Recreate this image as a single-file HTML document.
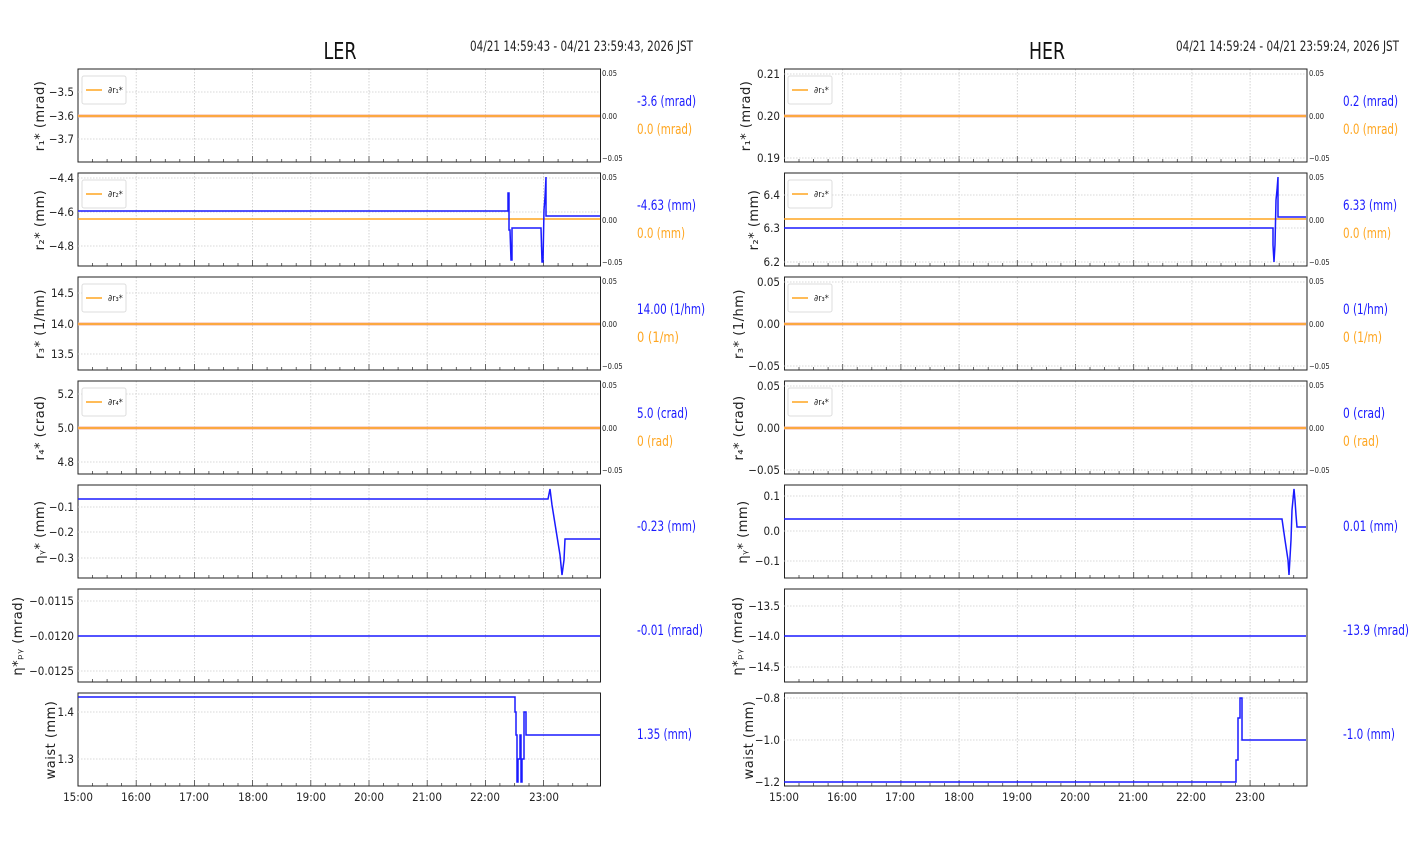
<!DOCTYPE html>
<html><head><meta charset="utf-8"><style>
html,body{margin:0;padding:0;background:#fff;}
svg{display:block;font-family:"Liberation Sans Narrow","DejaVu Sans Condensed","Liberation Sans",sans-serif;}
.t{font-size:11.5px;fill:#222;}
.s{font-size:7.5px;fill:#222;}
.yl{font-size:13px;fill:#222;letter-spacing:0.5px;font-family:"DejaVu Sans","Liberation Sans",sans-serif;}
.vb{font-size:14px;fill:#1a1aff;}
.vo{font-size:14px;fill:#ffa620;}
</style></head><body>
<svg width="1412" height="864" viewBox="0 0 1412 864" xmlns="http://www.w3.org/2000/svg">
<defs>
<g id="g">
 <g stroke="#c8c8c8" stroke-width="0.8" stroke-dasharray="1.5,1.5">
  <line x1="58.2" y1="0" x2="58.2" y2="93"/><line x1="116.4" y1="0" x2="116.4" y2="93"/><line x1="174.6" y1="0" x2="174.6" y2="93"/><line x1="232.8" y1="0" x2="232.8" y2="93"/><line x1="291" y1="0" x2="291" y2="93"/><line x1="349.2" y1="0" x2="349.2" y2="93"/><line x1="407.4" y1="0" x2="407.4" y2="93"/><line x1="465.6" y1="0" x2="465.6" y2="93"/>
 </g>
 <g stroke="#444" stroke-width="0.8">
  <line x1="0" y1="93" x2="0" y2="87"/><line x1="58.2" y1="93" x2="58.2" y2="87"/><line x1="116.4" y1="93" x2="116.4" y2="87"/><line x1="174.6" y1="93" x2="174.6" y2="87"/><line x1="232.8" y1="93" x2="232.8" y2="87"/><line x1="291" y1="93" x2="291" y2="87"/><line x1="349.2" y1="93" x2="349.2" y2="87"/><line x1="407.4" y1="93" x2="407.4" y2="87"/><line x1="465.6" y1="93" x2="465.6" y2="87"/>
  <line x1="14.5" y1="93" x2="14.5" y2="90"/><line x1="29.1" y1="93" x2="29.1" y2="90"/><line x1="43.6" y1="93" x2="43.6" y2="90"/><line x1="72.7" y1="93" x2="72.7" y2="90"/><line x1="87.3" y1="93" x2="87.3" y2="90"/><line x1="101.8" y1="93" x2="101.8" y2="90"/><line x1="130.9" y1="93" x2="130.9" y2="90"/><line x1="145.5" y1="93" x2="145.5" y2="90"/><line x1="160" y1="93" x2="160" y2="90"/><line x1="189.1" y1="93" x2="189.1" y2="90"/><line x1="203.7" y1="93" x2="203.7" y2="90"/><line x1="218.2" y1="93" x2="218.2" y2="90"/><line x1="247.3" y1="93" x2="247.3" y2="90"/><line x1="261.9" y1="93" x2="261.9" y2="90"/><line x1="276.4" y1="93" x2="276.4" y2="90"/><line x1="305.5" y1="93" x2="305.5" y2="90"/><line x1="320.1" y1="93" x2="320.1" y2="90"/><line x1="334.6" y1="93" x2="334.6" y2="90"/><line x1="363.7" y1="93" x2="363.7" y2="90"/><line x1="378.3" y1="93" x2="378.3" y2="90"/><line x1="392.8" y1="93" x2="392.8" y2="90"/><line x1="421.9" y1="93" x2="421.9" y2="90"/><line x1="436.5" y1="93" x2="436.5" y2="90"/><line x1="451" y1="93" x2="451" y2="90"/><line x1="480.1" y1="93" x2="480.1" y2="90"/><line x1="494.7" y1="93" x2="494.7" y2="90"/><line x1="509.2" y1="93" x2="509.2" y2="90"/>
 </g>
 <rect x="0" y="0" width="522.5" height="93" fill="none" stroke="#222" stroke-width="1"/>
</g>
<g id="leg"><rect x="4" y="7" width="44" height="28" rx="2" fill="#fff" stroke="#ddd"/><line x1="8" y1="21" x2="24" y2="21" stroke="#ffa620" stroke-width="1.5"/></g>
</defs>

<text x="340" y="59" text-anchor="middle" textLength="33" lengthAdjust="spacingAndGlyphs" style="font-size:23px;fill:#111">LER</text>
<text x="470" y="51" class="t" textLength="223" lengthAdjust="spacingAndGlyphs" style="font-size:14px">04/21 14:59:43 - 04/21 23:59:43, 2026 JST</text>
<text x="1047" y="59" text-anchor="middle" textLength="36" lengthAdjust="spacingAndGlyphs" style="font-size:23px;fill:#111">HER</text>
<text x="1176" y="51" class="t" textLength="223" lengthAdjust="spacingAndGlyphs" style="font-size:14px">04/21 14:59:24 - 04/21 23:59:24, 2026 JST</text>

<!-- LEFT -->
<g transform="translate(78,0)">
 <use href="#g" y="69"/><use href="#g" y="173"/><use href="#g" y="277"/><use href="#g" y="381"/><use href="#g" y="485"/><use href="#g" y="589"/><use href="#g" y="693"/>
</g>
<g stroke="#ccc" stroke-width="0.8" stroke-dasharray="1.5,1.5">
 <line x1="78" y1="92" x2="600" y2="92"/><line x1="78" y1="139" x2="600" y2="139"/>
 <line x1="78" y1="178" x2="600" y2="178"/><line x1="78" y1="212" x2="600" y2="212"/><line x1="78" y1="246" x2="600" y2="246"/>
 <line x1="78" y1="293" x2="600" y2="293"/><line x1="78" y1="354" x2="600" y2="354"/>
 <line x1="78" y1="394" x2="600" y2="394"/><line x1="78" y1="462" x2="600" y2="462"/>
 <line x1="78" y1="507" x2="600" y2="507"/><line x1="78" y1="532" x2="600" y2="532"/><line x1="78" y1="558" x2="600" y2="558"/>
 <line x1="78" y1="601" x2="600" y2="601"/><line x1="78" y1="671" x2="600" y2="671"/>
 <line x1="78" y1="712" x2="600" y2="712"/><line x1="78" y1="759" x2="600" y2="759"/>
</g>
<g fill="none" stroke-width="1.5">
 <line x1="78" y1="116" x2="600" y2="116" stroke="#f0b0a0" stroke-width="3"/><line x1="78" y1="116" x2="600" y2="116" stroke="#ffa620"/>
 <line x1="78" y1="219" x2="600" y2="219" stroke="#ffa620"/>
 <polyline stroke="#1a1aff" points="78,211 508,211 508,193 509,193 509,230 510,230 511,260 512,260 512,228 541,228 542,262 543,262 544,210 545,197 546,177 546,216 600,216"/>
 <line x1="78" y1="324" x2="600" y2="324" stroke="#f0b0a0" stroke-width="3"/><line x1="78" y1="324" x2="600" y2="324" stroke="#ffa620"/>
 <line x1="78" y1="428" x2="600" y2="428" stroke="#f0b0a0" stroke-width="3"/><line x1="78" y1="428" x2="600" y2="428" stroke="#ffa620"/>
 <polyline stroke="#1a1aff" points="78,499 548,499 550,489 552,505 556,530 560,555 562,575 564,560 565,539 600,539"/>
 <line x1="78" y1="636" x2="600" y2="636" stroke="#1a1aff"/>
 <polyline stroke="#1a1aff" points="78,697 515,697 515,712 516,712 516,735 517,735 517,782 518,782 518,759 520,759 520,735 521,735 521,782 522,782 522,759 524,759 524,712 526,712 526,735 600,735"/>
</g>
<g class="t" text-anchor="end">
 <text x="74" y="96">−3.5</text><text x="74" y="120">−3.6</text><text x="74" y="143">−3.7</text>
 <text x="74" y="182">−4.4</text><text x="74" y="216">−4.6</text><text x="74" y="250">−4.8</text>
 <text x="74" y="297">14.5</text><text x="74" y="328">14.0</text><text x="74" y="358">13.5</text>
 <text x="74" y="398">5.2</text><text x="74" y="432">5.0</text><text x="74" y="466">4.8</text>
 <text x="74" y="511">−0.1</text><text x="74" y="536">−0.2</text><text x="74" y="562">−0.3</text>
 <text x="74" y="605">−0.0115</text><text x="74" y="640">−0.0120</text><text x="74" y="675">−0.0125</text>
 <text x="74" y="716">1.4</text><text x="74" y="763">1.3</text>
</g>
<g class="s">
 <text x="602" y="76">0.05</text><text x="602" y="119">0.00</text><text x="602" y="161">−0.05</text>
 <text x="602" y="180">0.05</text><text x="602" y="223">0.00</text><text x="602" y="265">−0.05</text>
 <text x="602" y="284">0.05</text><text x="602" y="327">0.00</text><text x="602" y="369">−0.05</text>
 <text x="602" y="388">0.05</text><text x="602" y="431">0.00</text><text x="602" y="473">−0.05</text>
</g>
<g class="t" text-anchor="middle">
 <text x="78" y="801">15:00</text><text x="136" y="801">16:00</text><text x="194" y="801">17:00</text><text x="253" y="801">18:00</text><text x="311" y="801">19:00</text><text x="369" y="801">20:00</text><text x="427" y="801">21:00</text><text x="485" y="801">22:00</text><text x="544" y="801">23:00</text>
</g>
<g class="yl" text-anchor="middle">
 <text transform="translate(44,116) rotate(-90)">r₁* (mrad)</text>
 <text transform="translate(44,220) rotate(-90)">r₂* (mm)</text>
 <text transform="translate(44,324) rotate(-90)">r₃* (1/hm)</text>
 <text transform="translate(44,428) rotate(-90)">r₄* (crad)</text>
 <text transform="translate(44,532) rotate(-90)">ηᵧ* (mm)</text>
 <text transform="translate(22,636) rotate(-90)">η*ₚᵧ (mrad)</text>
 <text transform="translate(55,740) rotate(-90)">waist (mm)</text>
</g>
<use href="#leg" x="78" y="69"/><use href="#leg" x="78" y="173"/><use href="#leg" x="78" y="277"/><use href="#leg" x="78" y="381"/>
<g class="s" style="font-size:9px"><text x="108" y="93">∂r₁*</text><text x="108" y="197">∂r₂*</text><text x="108" y="301">∂r₃*</text><text x="108" y="405">∂r₄*</text></g>
<g lengthAdjust="spacingAndGlyphs">
 <text x="637" y="106" class="vb" textLength="59" lengthAdjust="spacingAndGlyphs">-3.6 (mrad)</text><text x="637" y="134" class="vo" textLength="55" lengthAdjust="spacingAndGlyphs">0.0 (mrad)</text>
 <text x="637" y="210" class="vb" textLength="59" lengthAdjust="spacingAndGlyphs">-4.63 (mm)</text><text x="637" y="238" class="vo" textLength="48" lengthAdjust="spacingAndGlyphs">0.0 (mm)</text>
 <text x="637" y="314" class="vb" textLength="68" lengthAdjust="spacingAndGlyphs">14.00 (1/hm)</text><text x="637" y="342" class="vo" textLength="42" lengthAdjust="spacingAndGlyphs">0 (1/m)</text>
 <text x="637" y="418" class="vb" textLength="51" lengthAdjust="spacingAndGlyphs">5.0 (crad)</text><text x="637" y="446" class="vo" textLength="36" lengthAdjust="spacingAndGlyphs">0 (rad)</text>
 <text x="637" y="531" class="vb" textLength="59" lengthAdjust="spacingAndGlyphs">-0.23 (mm)</text>
 <text x="637" y="635" class="vb" textLength="66" lengthAdjust="spacingAndGlyphs">-0.01 (mrad)</text>
 <text x="637" y="739" class="vb" textLength="55" lengthAdjust="spacingAndGlyphs">1.35 (mm)</text>
</g>

<!-- RIGHT -->
<g transform="translate(784.5,0)">
 <use href="#g" y="69"/><use href="#g" y="173"/><use href="#g" y="277"/><use href="#g" y="381"/><use href="#g" y="485"/><use href="#g" y="589"/><use href="#g" y="693"/>
</g>
<g stroke="#ccc" stroke-width="0.8" stroke-dasharray="1.5,1.5">
 <line x1="784" y1="74" x2="1306" y2="74"/><line x1="784" y1="158" x2="1306" y2="158"/>
 <line x1="784" y1="195" x2="1306" y2="195"/><line x1="784" y1="228" x2="1306" y2="228"/><line x1="784" y1="262" x2="1306" y2="262"/>
 <line x1="784" y1="282" x2="1306" y2="282"/><line x1="784" y1="366" x2="1306" y2="366"/>
 <line x1="784" y1="386" x2="1306" y2="386"/><line x1="784" y1="470" x2="1306" y2="470"/>
 <line x1="784" y1="496" x2="1306" y2="496"/><line x1="784" y1="531" x2="1306" y2="531"/><line x1="784" y1="561" x2="1306" y2="561"/>
 <line x1="784" y1="606" x2="1306" y2="606"/><line x1="784" y1="667" x2="1306" y2="667"/>
 <line x1="784" y1="698" x2="1306" y2="698"/><line x1="784" y1="740" x2="1306" y2="740"/>
</g>
<g fill="none" stroke-width="1.5">
 <line x1="784" y1="116" x2="1306" y2="116" stroke="#f0b0a0" stroke-width="3"/><line x1="784" y1="116" x2="1306" y2="116" stroke="#ffa620"/>
 <line x1="784" y1="219" x2="1306" y2="219" stroke="#ffa620"/>
 <polyline stroke="#1a1aff" points="784,228 1273,228 1273,245 1274,262 1275,245 1276,200 1277,190 1278,177 1278,217 1306,217"/>
 <line x1="784" y1="324" x2="1306" y2="324" stroke="#f0b0a0" stroke-width="3"/><line x1="784" y1="324" x2="1306" y2="324" stroke="#ffa620"/>
 <line x1="784" y1="428" x2="1306" y2="428" stroke="#f0b0a0" stroke-width="3"/><line x1="784" y1="428" x2="1306" y2="428" stroke="#ffa620"/>
 <polyline stroke="#1a1aff" points="784,519 1282,519 1285,540 1288,560 1289,575 1291,540 1292,510 1294,489 1295,500 1296,515 1297,527 1306,527"/>
 <line x1="784" y1="636" x2="1306" y2="636" stroke="#1a1aff"/>
 <polyline stroke="#1a1aff" points="784,782 1236,782 1236,760 1238,760 1238,718 1240,718 1240,698 1242,698 1242,740 1306,740"/>
</g>
<g class="t" text-anchor="end">
 <text x="780" y="78">0.21</text><text x="780" y="120">0.20</text><text x="780" y="162">0.19</text>
 <text x="780" y="199">6.4</text><text x="780" y="232">6.3</text><text x="780" y="266">6.2</text>
 <text x="780" y="286">0.05</text><text x="780" y="328">0.00</text><text x="780" y="370">−0.05</text>
 <text x="780" y="390">0.05</text><text x="780" y="432">0.00</text><text x="780" y="474">−0.05</text>
 <text x="780" y="500">0.1</text><text x="780" y="535">0.0</text><text x="780" y="565">−0.1</text>
 <text x="780" y="610">−13.5</text><text x="780" y="640">−14.0</text><text x="780" y="671">−14.5</text>
 <text x="780" y="702">−0.8</text><text x="780" y="744">−1.0</text><text x="780" y="786">−1.2</text>
</g>
<g class="s">
 <text x="1309" y="76">0.05</text><text x="1309" y="119">0.00</text><text x="1309" y="161">−0.05</text>
 <text x="1309" y="180">0.05</text><text x="1309" y="223">0.00</text><text x="1309" y="265">−0.05</text>
 <text x="1309" y="284">0.05</text><text x="1309" y="327">0.00</text><text x="1309" y="369">−0.05</text>
 <text x="1309" y="388">0.05</text><text x="1309" y="431">0.00</text><text x="1309" y="473">−0.05</text>
</g>
<g class="t" text-anchor="middle">
 <text x="784" y="801">15:00</text><text x="842" y="801">16:00</text><text x="900" y="801">17:00</text><text x="959" y="801">18:00</text><text x="1017" y="801">19:00</text><text x="1075" y="801">20:00</text><text x="1133" y="801">21:00</text><text x="1191" y="801">22:00</text><text x="1250" y="801">23:00</text>
</g>
<g class="yl" text-anchor="middle">
 <text transform="translate(750,116) rotate(-90)">r₁* (mrad)</text>
 <text transform="translate(758,220) rotate(-90)">r₂* (mm)</text>
 <text transform="translate(743,324) rotate(-90)">r₃* (1/hm)</text>
 <text transform="translate(743,428) rotate(-90)">r₄* (crad)</text>
 <text transform="translate(747,532) rotate(-90)">ηᵧ* (mm)</text>
 <text transform="translate(742,636) rotate(-90)">η*ₚᵧ (mrad)</text>
 <text transform="translate(753,740) rotate(-90)">waist (mm)</text>
</g>
<use href="#leg" x="784" y="69"/><use href="#leg" x="784" y="173"/><use href="#leg" x="784" y="277"/><use href="#leg" x="784" y="381"/>
<g class="s" style="font-size:9px"><text x="814" y="93">∂r₁*</text><text x="814" y="197">∂r₂*</text><text x="814" y="301">∂r₃*</text><text x="814" y="405">∂r₄*</text></g>
<g>
 <text x="1343" y="106" class="vb" textLength="55" lengthAdjust="spacingAndGlyphs">0.2 (mrad)</text><text x="1343" y="134" class="vo" textLength="55" lengthAdjust="spacingAndGlyphs">0.0 (mrad)</text>
 <text x="1343" y="210" class="vb" textLength="54" lengthAdjust="spacingAndGlyphs">6.33 (mm)</text><text x="1343" y="238" class="vo" textLength="48" lengthAdjust="spacingAndGlyphs">0.0 (mm)</text>
 <text x="1343" y="314" class="vb" textLength="45" lengthAdjust="spacingAndGlyphs">0 (1/hm)</text><text x="1343" y="342" class="vo" textLength="39" lengthAdjust="spacingAndGlyphs">0 (1/m)</text>
 <text x="1343" y="418" class="vb" textLength="42" lengthAdjust="spacingAndGlyphs">0 (crad)</text><text x="1343" y="446" class="vo" textLength="36" lengthAdjust="spacingAndGlyphs">0 (rad)</text>
 <text x="1343" y="531" class="vb" textLength="55" lengthAdjust="spacingAndGlyphs">0.01 (mm)</text>
 <text x="1343" y="635" class="vb" textLength="66" lengthAdjust="spacingAndGlyphs">-13.9 (mrad)</text>
 <text x="1343" y="739" class="vb" textLength="52" lengthAdjust="spacingAndGlyphs">-1.0 (mm)</text>
</g>
</svg>
</body></html>
